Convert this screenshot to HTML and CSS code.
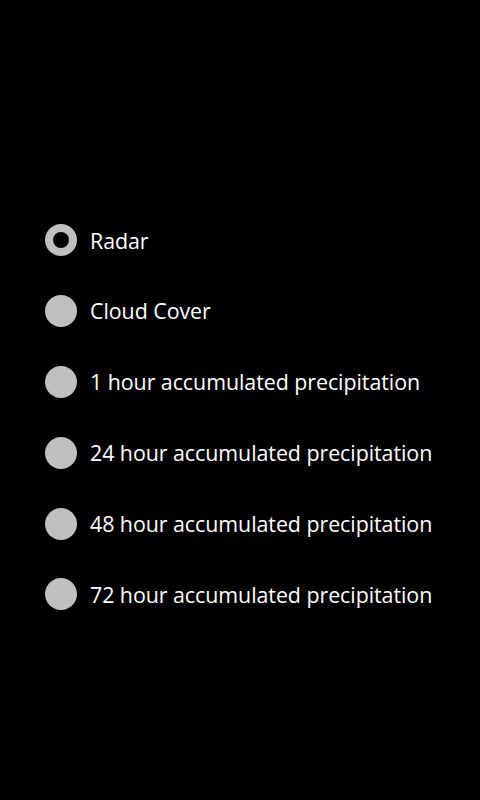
FILE: index.html
```html
<!DOCTYPE html>
<html>
<head>
<meta charset="utf-8">
<link rel="stylesheet" href="styles.css">
</head>
<body>
<ul class="options">
  <li class="option selected"><span class="radio"></span><span class="label">Radar</span></li>
  <li class="option"><span class="radio"></span><span class="label">Cloud Cover</span></li>
  <li class="option"><span class="radio"></span><span class="label">1 hour accumulated precipitation</span></li>
  <li class="option"><span class="radio"></span><span class="label">24 hour accumulated precipitation</span></li>
  <li class="option"><span class="radio"></span><span class="label">48 hour accumulated precipitation</span></li>
  <li class="option"><span class="radio"></span><span class="label">72 hour accumulated precipitation</span></li>
</ul>
</body>
</html>
```
FILE: styles.css
```css
html, body {
  margin: 0;
  padding: 0;
  background: #000;
  width: 480px;
  height: 800px;
  overflow: hidden;
}
body {
  font-family: "Open Sans", "Noto Sans", sans-serif;
  color: #fff;
}
.options {
  list-style: none;
  margin: 0;
  padding: 205px 0 0 45px;
  display: flex;
  flex-direction: column;
}
.option {
  height: 70.8px;
  display: flex;
  align-items: center;
  gap: 13px;
}
.radio {
  width: 32px;
  height: 32px;
  border-radius: 50%;
  background: #c0c0c0;
  box-sizing: border-box;
  flex: none;
}
.option.selected .radio {
  background: #000;
  border: 8px solid #c0c0c0;
}
.label {
  font-size: 21.4px;
  line-height: 1;
  letter-spacing: -0.05px;
}
```
